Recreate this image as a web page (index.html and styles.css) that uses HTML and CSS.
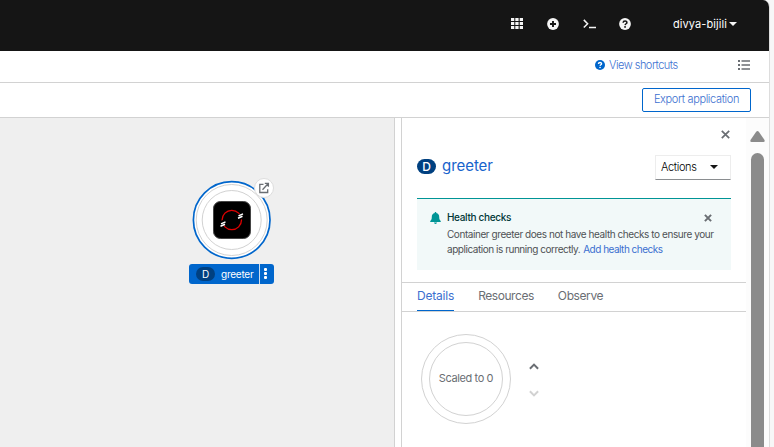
FILE: index.html
```html
<!DOCTYPE html>
<html lang="en">
<head>
<meta charset="utf-8">
<title>Topology</title>
<link rel="stylesheet" href="styles.css">
</head>
<body>
<div class="app">
  <header class="masthead">
    <svg class="ico grid" width="12" height="11" viewBox="0 0 12 11" fill="#f5f5f5"><path d="M0 0h3.3v3H0zM4.3 0h3.3v3H4.3zM8.700 0H12v3H8.700zM0 4h3.300v3H0zM4.300 4h3.300v3H4.300zM8.700 4H12v3H8.700zM0 8h3.300v3H0zM4.300 8h3.300v3H4.300zM8.700 8H12v3H8.700z"/></svg>
    <svg class="ico plus" width="12" height="12" viewBox="0 0 12 12"><circle cx="6" cy="6" r="5.900" fill="#f5f5f5"/><path d="M6 3v6M3 6h6" stroke="#151515" stroke-width="1.900"/></svg>
    <svg class="ico term" width="13" height="10" viewBox="0 0 13 10" fill="none" stroke="#f5f5f5" stroke-width="1.500"><path d="M.8 .9 4.600 4.700.8 8.500M6 8.600h7"/></svg>
    <svg class="ico help" width="12" height="12" viewBox="0 0 12 12"><circle cx="6" cy="6" r="5.900" fill="#f5f5f5"/><path d="M4.100 4.700C4.200 2.500 8 2.500 7.900 4.600 7.800 5.800 6.200 5.700 6.100 7.100" fill="none" stroke="#151515" stroke-width="1.500"/><circle cx="6.050" cy="8.900" r=".95" fill="#151515"/></svg>
    <span class="user"><span class="t-user">divya-bijili</span></span>
    <svg class="user-caret" width="8" height="4" viewBox="0 0 8 4" fill="#f5f5f5"><path d="M0 0h8L4 4z"/></svg>
  </header>
  <div class="shortcuts">
    <svg class="q" width="10" height="10" viewBox="0 0 12 12"><circle cx="6" cy="6" r="6" fill="#06c"/><path d="M4.100 4.700C4.200 2.500 8 2.500 7.900 4.600 7.800 5.800 6.200 5.700 6.100 7.100" fill="none" stroke="#fff" stroke-width="1.600"/><circle cx="6.050" cy="9" r="1" fill="#fff"/></svg>
    <a class="t-view">View shortcuts</a>
    <svg class="list" width="12" height="10" viewBox="0 0 12 10" fill="#6a6e73"><path d="M0 0h2v2H0zM0 4h2v2H0zM0 8h2v2H0zM3.500 .3H12v1.500H3.500zM3.500 4.300H12v1.500H3.500zM3.500 8.300H12v1.500H3.500z"/></svg>
  </div>
  <div class="toolbar"><button class="export"><span class="t-export">Export application</span></button></div>
  <main class="main">
    <section class="graph">
      <div class="node">
        <svg class="ring" width="84" height="84" viewBox="0 0 84 84">
          <circle cx="41.700" cy="42" r="38.300" fill="#fff" stroke="#06c" stroke-width="1.700"/>
          <circle cx="41.700" cy="42" r="35.500" fill="none" stroke="#d2d2d2"/>
          <circle cx="41.700" cy="42" r="29.500" fill="none" stroke="#d2d2d2"/>
          <rect x="23.500" y="23.500" width="37" height="37" rx="7" fill="#000" stroke="#444"/>
          <circle cx="41.800" cy="42" r="9.700" fill="none" stroke="#e00000" stroke-width="1.300"/>
          <path d="M30 46.500l7-3.500M47 40.500l7-3.500" stroke="#000" stroke-width="5.500"/>
          <path d="M30.500 48.300l4.500-2M31 45.900l4.500-2M48 40.300l4.500-2M48.500 37.900l4.500-2" stroke="#fff" stroke-width="1.500"/>
        </svg>
        <svg class="ext" width="20" height="20" viewBox="0 0 20 20"><circle cx="10" cy="10" r="9.500" fill="#fff" stroke="#ddd"/><path d="M9.500 6.300H5.800v8.200h7.900v-3.300M8.500 11.700l5.500-6M10.800 5.300h3.600v3.500" fill="none" stroke="#6a6e73" stroke-width="1.300"/></svg>
        <div class="label"><span class="pill">D</span><span class="t-node">greeter</span><span class="kebab"><i></i><i></i><i></i></span></div>
      </div>
    </section>
    <div class="gutter"></div>
    <aside class="panel">
      <div class="close-row"><svg width="9" height="9" viewBox="0 0 9 9" stroke="#6a6e73" stroke-width="1.700"><path d="M.8.8 8.200 8.200M8.200.8.8 8.200"/></svg></div>
      <div class="title-row"><span class="badge">D</span><a class="t-title">greeter</a>
        <button class="actions"><span class="t-actions">Actions</span><svg width="8" height="4" viewBox="0 0 8 4"><path d="M0 0h8L4 4z" fill="#151515"/></svg></button></div>
      <div class="alert">
        <svg class="bell" width="11" height="12" viewBox="0 0 11 12" fill="#009596"><path d="M4.800 0h1.400v1C8.400 1.400 9.200 3 9.200 5c0 2.300.6 3.200 1.500 4 .4.500.2 1-.4 1H.7C.1 10-.1 9.500.3 9 1.200 8.200 1.800 7.300 1.800 5c0-2 .8-3.600 3-4zM4 10.600h3c0 1.800-3 1.800-3 0z"/></svg>
        <div class="alert-text"><div class="alert-title"><b class="t-health">Health checks</b></div>
        <div class="line"><span class="t-l1">Container greeter does not have health checks to ensure your</span></div>
        <div class="line"><span class="t-l2">application is running correctly.</span><a class="t-add">Add health checks</a></div></div>
        <svg class="alert-close" width="8" height="8" viewBox="0 0 8 8" stroke="#6a6e73" stroke-width="2"><path d="M.9.9 7.100 7.100M7.100.9.9 7.100"/></svg>
      </div>
      <nav class="tabs"><a class="tab active"><span class="t-details">Details</span></a><a class="tab"><span class="t-res">Resources</span></a><a class="tab"><span class="t-obs">Observe</span></a></nav>
      <div class="scale">
        <div class="donut"><div class="inner"><span class="t-scaled">Scaled to 0</span></div></div>
        <div class="steps"><svg width="10" height="7" viewBox="0 0 10 7" fill="none" stroke="#6a6e73" stroke-width="2"><path d="M.9 5.700 5 1.600l4.100 4.100"/></svg><svg width="10" height="7" viewBox="0 0 10 7" fill="none" stroke="#d2d2d2" stroke-width="2"><path d="M.9 1.300 5 5.400l4.100-4.100"/></svg></div>
      </div>
    </aside>
    <div class="scrollbar"><svg width="15" height="11" viewBox="0 0 15 11" fill="#8b8b8b"><path d="M6 .9Q7.500-.7 9 .9L14.500 9q.7 2-1 2h-12q-1.700 0-1-2z"/></svg><div class="thumb"></div></div>
  </main>
</div>
</body>
</html>
```
FILE: styles.css
```css
* { box-sizing: border-box; }
body { margin: 0; background: #f7f7f7; font-family: Inter, "Liberation Sans", sans-serif; font-size: 11px; color: #151515; overflow: hidden; }
svg { display: block; flex: none; }
span, a, b { white-space: nowrap; }
button { font: inherit; padding: 0; margin: 0; }
.app { width: 770px; height: 447px; background: #fff; border-right: 1px solid #ddd; border-top-right-radius: 7px; overflow: hidden; display: flex; flex-direction: column; }
.masthead { height: 51px; flex: none; background: #151515; display: flex; align-items: center; padding: 0 0 4px 511px; color: #fff; }
.plus { margin-left: 24px; }
.term { margin-left: 24px; }
.help { margin-left: 23px; }
.user { margin-left: 42px; width: 56px; }
.t-user { letter-spacing: .08px; }
.shortcuts { height: 32px; flex: none; border-bottom: 1px solid #d2d2d2; display: flex; align-items: center; padding: 0 0 3px 595px; color: #3b6fd0; }
.t-view { margin-left: 4px; width: 129px; font-weight: 300; letter-spacing: -.5px; }
.toolbar { height: 35px; flex: none; border-bottom: 1px solid #d2d2d2; display: flex; justify-content: flex-end; padding: 5px 18px 0 0; }
.export { width: 109px; height: 24px; border: 1px solid #06c; border-radius: 2px; background: #fff; color: #3b6fd0; padding-bottom: 2px; }
.t-export { font-weight: 300; letter-spacing: -.36px; }
.main { flex: 1; display: flex; min-height: 0; }
.graph { width: 394px; background: #efefef; padding: 60px 0 0 189px; }
.node { position: relative; width: 86px; }
.ring { margin-left: 1px; }
.ext { position: absolute; left: 65px; top: 0; }
.label { height: 20px; width: 85px; margin-top: 2px; background: #06c; border-radius: 3px; color: #fff; display: flex; align-items: center; }
.pill { width: 19px; height: 14px; margin: 0 6px 0 7px; border-radius: 7px; background: #004080; text-align: center; line-height: 14px; font-size: 10px; }
.t-node { font-size: 10px; width: 38px; letter-spacing: -.25px; padding-bottom: 1px; }
.kebab { height: 20px; border-left: 1px solid #cde; padding: 4px 0 0 4px; display: flex; flex-direction: column; gap: 1px; }
.kebab i { width: 3px; height: 3px; border-radius: 1px; background: #fff; }
.gutter { width: 8px; border: solid #d2d2d2; border-width: 0 1px; }
.panel { width: 344px; }
.close-row { height: 37px; padding: 12px 0 0 320px; }
.close-row svg { margin-left: -1px; }
.title-row { height: 43px; padding-left: 15px; display: flex; }
.badge { width: 19px; height: 15px; margin-top: 4px; border-radius: 8px; background: #004080; color: #fff; font-size: 12px; font-weight: 500; line-height: 15px; text-align: center; }
.t-title { margin-left: 6px; color: #1763cc; font-size: 15px; line-height: 22px; width: 51px; letter-spacing: -.05px; }
.actions { margin-left: auto; margin-right: 15px; width: 76px; height: 25px; background: #fff; border: 1px solid #ededed; border-bottom-color: #8a8d90; display: flex; align-items: center; justify-content: space-between; padding: 0 12px 1px 5px; }
.t-actions { font-weight: 300; letter-spacing: -.35px; }
.alert { margin: 0 15px; height: 72px; background: #f2f9f9; border-top: 1px solid #009596; padding: 12px 0 0 13px; display: flex; }
.bell { margin-top: 1px; }
.alert-text { margin: -1px 0 0 6px; width: 257px; font-size: 10px; color: #4f5255; }
.alert-title { height: 17px; line-height: 14px; color: #003737; }
.alert-title b { font-weight: 500; letter-spacing: -.33px; }
.line { height: 15px; line-height: 15px; display: flex; gap: 3px; }
.line a { color: #3b6fd0; }
.t-l1 { letter-spacing: -.43px; }
.t-l2 { letter-spacing: -.46px; }
.t-add { letter-spacing: -.51px; }
.alert-close { margin-top: 3px; }
.tabs { height: 30px; margin-top: 12px; border: solid #d2d2d2; border-width: 1px 0; display: flex; gap: 24px; padding-left: 15px; font-size: 12px; line-height: 26px; color: #6a6e73; }
.tab { height: 28px; }
.t-details { letter-spacing: -.2px; }
.t-res { letter-spacing: -.44px; }
.t-obs { letter-spacing: -.4px; }
.active { border-bottom: 1px solid #06c; color: #3b6fd0; }
.scale { display: flex; padding: 22px 0 0 19px; }
.donut { width: 90px; height: 90px; border: 1px solid #d2d2d2; border-radius: 50%; padding: 7px; }
.inner { width: 74px; height: 74px; border: 1px solid #d2d2d2; border-radius: 50%; display: flex; align-items: center; justify-content: center; color: #6a6e73; padding-bottom: 2px; }
.t-scaled { letter-spacing: -.4px; }
.steps { margin: 29px 0 0 17.5px; display: flex; flex-direction: column; gap: 20px; }
.scrollbar { width: 23px; background: #fcfcfc; padding: 13px 0 0 4px; display: flex; flex-direction: column; }
.thumb { width: 13px; margin: 11px 0 0 1px; flex: 1; background: #8b8b8b; border-radius: 7px 7px 0 0; }
```
